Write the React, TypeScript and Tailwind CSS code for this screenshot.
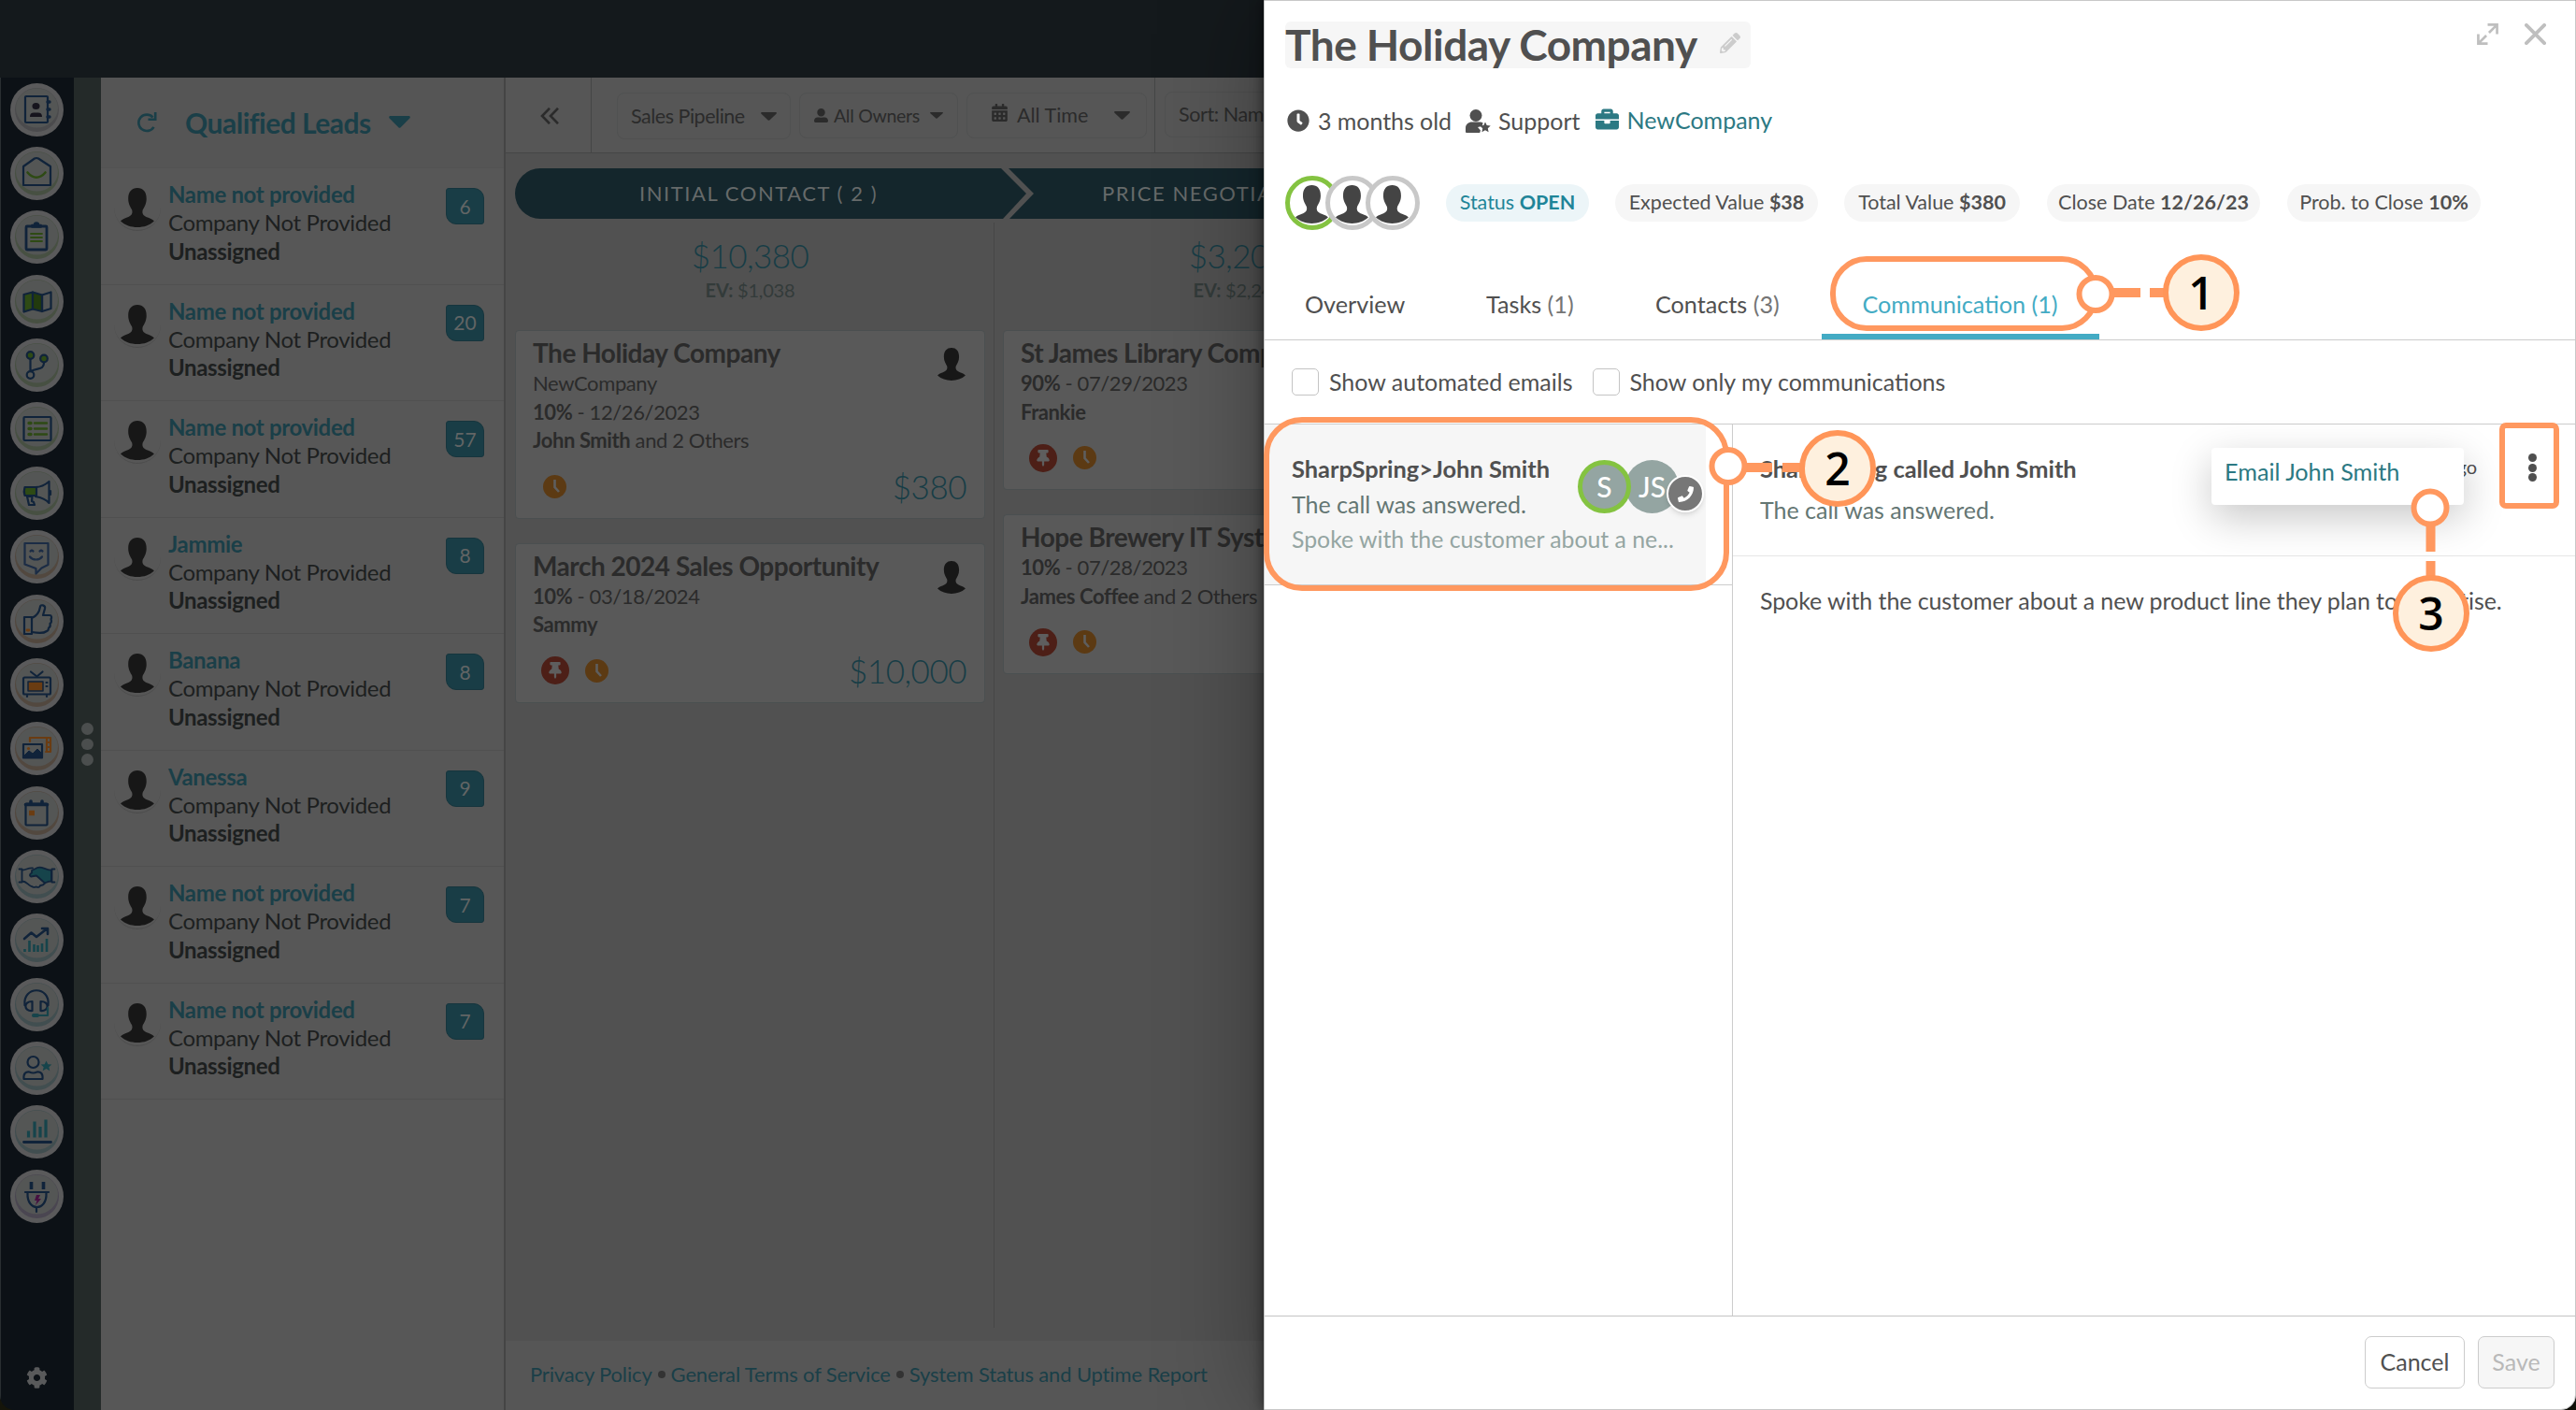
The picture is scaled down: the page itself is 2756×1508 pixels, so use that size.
import type { ReactNode } from 'react'
import { FaPencilAlt, FaUserAlt, FaBriefcase, FaCalendarAlt, FaThumbtack, FaClock, FaPhone, FaCog } from 'react-icons/fa'

const NAVY = '#10233a'
const GREEN = '#2e4a14'
const ORANGE = '#6a3c12'
const TEAL = '#16444b'

interface Lead {
  name: string
  score: number
}

const leads: Lead[] = [
  { name: 'Name not provided', score: 6 },
  { name: 'Name not provided', score: 20 },
  { name: 'Name not provided', score: 57 },
  { name: 'Jammie', score: 8 },
  { name: 'Banana', score: 8 },
  { name: 'Vanessa', score: 9 },
  { name: 'Name not provided', score: 7 },
  { name: 'Name not provided', score: 7 },
]

/** Sidebar icons, drawn in the 57x57 box of their round button. */
const navIcons: { key: string; tint: string; art: ReactNode }[] = [
  {
    key: 'contacts',
    tint: '#4b4b4d',
    art: (
      <>
        <rect x="16" y="14" width="24" height="28" rx="1" />
        <path d="M40 20h2M40 28h2M40 36h2" strokeWidth="3.4" />
        <ellipse cx="27.5" cy="24.5" rx="4" ry="3.6" fill="#16141d" stroke="none" />
        <path d="M21 36c0-4 2-5 6.500-4.400 4.500-.6 6.500.4 6.500 4.400z" fill="#16141d" stroke="none" />
      </>
    ),
  },
  {
    key: 'mail',
    tint: '#475042',
    art: (
      <>
        <path d="M14 21 26 12.500q2-1 4 0L43 21v20H14z" />
        <path d="M18.500 27.500c6 7 13 7 19 0" stroke={GREEN} strokeWidth="2.600" />
      </>
    ),
  },
  {
    key: 'forms',
    tint: '#475042',
    art: (
      <>
        <rect x="17" y="17" width="22" height="25" rx="1" strokeWidth="2.800" />
        <path d="M23 18v-2.500h2.500a2.500 2.500 0 0 1 5 0H33V18z" fill={NAVY} strokeWidth="1.500" />
        <path d="M22 25h12M22 29h12M22 33h12" stroke={GREEN} strokeWidth="1.800" />
      </>
    ),
  },
  {
    key: 'map',
    tint: '#475042',
    art: (
      <>
        <path d="M14.500 21 24 18.500v18L14.500 39.500z" fill={GREEN} />
        <path d="m24 18.500 10 3V39l-10-2.500z" fill="#223a0d" />
        <path d="m34 21.500 9.500-3V36L34 39z" />
      </>
    ),
  },
  {
    key: 'branch',
    tint: '#475042',
    art: (
      <>
        <path d="M21.500 22v13M36 26c0 8-7 5-14 9" />
        <circle cx="21.500" cy="18" r="3.800" fill={GREEN} />
        <circle cx="36" cy="21.500" r="3.800" fill={GREEN} />
        <circle cx="21.500" cy="39" r="3.800" />
      </>
    ),
  },
  {
    key: 'lists',
    tint: '#475042',
    art: (
      <>
        <rect x="14.500" y="16" width="29" height="25" rx="1" />
        <path d="M26 22.500h13M26 28.500h13M26 34.500h13" stroke={GREEN} strokeWidth="2.400" />
        <path d="M20 22.500h2M20 28.500h2M20 34.500h2" stroke={GREEN} strokeWidth="3.400" />
      </>
    ),
  },
  {
    key: 'campaigns',
    tint: '#475042',
    art: (
      <>
        <path d="M27 22c6 0 11-3 14.500-6v23C38 35 33 33 27 32z" />
        <path d="M15.500 22H28v9H15.500q-1.500-4.500 0-9z" fill={GREEN} />
        <path d="M18 32l2 9h6l-1-3-2-1 .5-5z" />
        <path d="M43 26v4" />
      </>
    ),
  },
  {
    key: 'chat',
    tint: '#52483f',
    art: (
      <>
        <path d="M15.500 14h25v23l-7 3.500-6 6V41l-12-4.500z" stroke="#1b2c45" />
        <path d="M21 28.500c3 4 10 4 13 0M21.500 22.500l1.500-1 1.500 1M31.500 22.500l1.500-1 1.500 1" stroke="#1b2c45" />
      </>
    ),
  },
  {
    key: 'social',
    tint: '#52483f',
    art: (
      <>
        <path d="M15 24h8v18h-8z" />
        <path d="M23 25c5-2 8-6 9-12 0-3 6-2 5 2l-2 7h7c2.500 0 2.500 3 1.500 4 .8 2 .5 4-1 5 .5 2 0 4-1.500 4.500 0 2-.5 3-2 3.500-4 3-10 2-16 1" />
        <path d="M18 38h2" stroke={ORANGE} strokeWidth="2.800" />
      </>
    ),
  },
  {
    key: 'media',
    tint: '#52483f',
    art: (
      <>
        <rect x="14" y="20.500" width="29" height="18" rx="1.500" />
        <rect x="19" y="25" width="16" height="10" fill={ORANGE} strokeWidth="1.500" />
        <path d="m22 14.500 6.500 5 6-5M18 40v1M39 40v1" />
        <path d="M38.500 26h1M38.500 30h1" />
      </>
    ),
  },
  {
    key: 'assets',
    tint: '#52483f',
    art: (
      <>
        <path d="M21 21v-4h22v15h-5M39 17v14M43 22h-4M43 27h-4" stroke={ORANGE} />
        <rect x="14" y="24" width="20" height="14.500" />
        <path d="m14 37 6-6 4 3 5-5 5 5v4H14z" fill={NAVY} strokeWidth="1" />
        <circle cx="19.500" cy="28.500" r="1.600" fill={ORANGE} stroke="none" />
      </>
    ),
  },
  {
    key: 'calendar',
    tint: '#52483f',
    art: (
      <>
        <rect x="16.500" y="18.500" width="23" height="23" rx="1" />
        <path d="M16.500 19.500h23M22 16v2M34 16v2" strokeWidth="3.600" />
        <path d="M20 28.500h6" stroke={ORANGE} strokeWidth="5.500" strokeLinecap="butt" />
      </>
    ),
  },
  {
    key: 'sales',
    tint: '#414e50',
    art: (
      <>
        <path d="m23 22 6-3c5-2 9 3 15 2.500v12c-4 0-5 1-7 2l-9-8-6 1c-2-1-1-3 1-4z" fill={TEAL} strokeWidth="1.800" />
        <path d="M9.500 20.500h3v14h-3M47.500 20.500h-3v14h3M13 21.500c4 0 6-2.500 11-2M13 33.500c5 0 6 5 11 6 2 1 3 0 4 0 2 1 4 0 4-1.500 3 0 4-1 5-2.500" strokeWidth="1.800" />
      </>
    ),
  },
  {
    key: 'analytics',
    tint: '#414e50',
    art: (
      <>
        <path d="m15 27 7.500-6.500 5.500 4.500 11-8.500M34 16h6v6" strokeWidth="2.600" />
        <path d="M15.500 41v-3M20.500 41V29M25.500 41v-8M29.500 41v-7M34 41v-9M39 41V27" stroke={TEAL} strokeWidth="2.600" strokeLinecap="butt" />
      </>
    ),
  },
  {
    key: 'support',
    tint: '#414e50',
    art: (
      <>
        <path d="M15.500 29C13 8 43 8 40.500 29M23.500 25v10c-9 1-10-10 0-10zM32.500 25v10c9 1 10-10 0-10z" />
        <path d="M40 32v8H28" stroke={TEAL} />
        <path d="M25 40h4" stroke={TEAL} strokeWidth="4" />
      </>
    ),
  },
  {
    key: 'accounts',
    tint: '#414e50',
    art: (
      <>
        <circle cx="24.500" cy="22" r="6" />
        <path d="M14.500 40c-.5-6 2-8 6-7.500q4 2 8 0c4-.5 6.500 1.500 6 7.500z" />
        <path d="m38.500 20.500 1.800 3.700 4 .4-3 2.600 1 4-3.800-2.200-3.800 2.200 1-4-3-2.600 4-.4z" fill={TEAL} stroke="none" />
      </>
    ),
  },
  {
    key: 'reports',
    tint: '#414e50',
    art: (
      <>
        <path d="M14.500 39.500h29" strokeWidth="2.800" />
        <path d="M19.500 34.500v-7M26 34.500v-17M32 34.500V23M38 34.500V15.500" stroke={TEAL} strokeWidth="3.200" strokeLinecap="butt" />
      </>
    ),
  },
  {
    key: 'integrations',
    tint: '#4a4651',
    art: (
      <>
        <path d="M16 24h25M18.500 25c-1 20 21 20 20 0M28 41v4" />
        <path d="M22.500 13v8M35.500 13v8" strokeWidth="3.600" strokeLinecap="butt" />
        <path d="M28 27h4l-2 4h3l-6 7 1.500-5H26z" fill="#461041" stroke="none" />
      </>
    ),
  },
]

function Silhouette({ className }: { className: string }) {
  return (
    <svg viewBox="0 0 36 42" className={className} fill="currentColor">
      <path d="M18 0c6 0 9.700 4 9.700 11.500 0 5.500-2.300 9-4 12-1.200 4.500 1.200 6.500 5.200 8 3.500 1.200 6 2.500 7 4C31 40 25 42 18 42S5 40 0 35.500c1-1.500 3.500-2.800 7-4 4-1.500 6.400-3.500 5.200-8-1.600-3-4-6.500-4-12C8.200 4 12 0 18 0z" />
    </svg>
  )
}

function Caret({ className }: { className: string }) {
  return (
    <svg viewBox="0 0 20 12" className={className} fill="currentColor" preserveAspectRatio="none">
      <path d="M1.200 0h17.600q1.800.6.600 2.200L11 11.200q-1 1-2 0L.6 2.200Q-.6.600 1.200 0z" />
    </svg>
  )
}

function Sidebar() {
  return (
    <div className="flex w-[79px] shrink-0 flex-col items-center border-l border-[#2a2f31] bg-[#0c1116] pr-px">
      {navIcons.map((icon) => (
        <div key={icon.key} className="flex h-[68.360px] w-[57px] shrink-0 items-center">
          <svg viewBox="0 0 57 57" className="size-[57px]" fill="none" stroke={NAVY} strokeWidth="2.200" strokeLinecap="round" strokeLinejoin="round">
            <circle cx="28.500" cy="28.500" r="28.500" fill="#5a5a5b" stroke="none" />
            <circle cx="28.500" cy="28.500" r="23.500" fill={icon.tint} stroke="none" />
            <ellipse cx="28.500" cy="26.500" rx="22.500" ry="21" fill="#545655" stroke="none" />
            {icon.art}
          </svg>
        </div>
      ))}
      <FaCog className="mt-auto mb-[23px] size-[23px] text-[#595a5b]" />
    </div>
  )
}

function LeadRow({ lead }: { lead: Lead }) {
  return (
    <div className="flex h-[124.500px] shrink-0 border-b border-[#505050] pt-[12px] pr-[21px] pl-[14px]">
      <div className="mt-[5px] flex size-[50px] shrink-0 justify-center rounded-full border-b border-[#4c4c4c] pt-[4px]">
        <Silhouette className="h-[42px] w-[36px] text-[#171717]" />
      </div>
      <div className="mt-px ml-[8px] flex-1 text-[24px] leading-[30.300px] tracking-[-0.340px] text-[#1d2020]">
        <div className="font-bold text-[#1a3f48]">{lead.name}</div>
        <div>Company Not Provided</div>
        <div className="font-bold">Unassigned</div>
      </div>
      <div className="mt-[9px] flex h-[39px] w-[41px] items-center justify-center rounded-tl-[3px] rounded-tr-[11px] rounded-br-[3px] rounded-bl-[11px] border border-[#16353d] bg-[#193d46] text-[21px] text-[#626565]">
        {lead.score}
      </div>
    </div>
  )
}

function LeadsPanel() {
  return (
    <div className="flex w-[433px] shrink-0 flex-col border-r-2 border-[#454545] bg-[#575757]">
      <div className="flex h-[97px] shrink-0 items-center border-b border-[#535353] bg-[#555] pl-[38px] text-[#1a3f48]">
        <svg viewBox="0 0 22 22" className="size-[22px]" fill="none" stroke="currentColor" strokeWidth="2.600">
          <path d="M18.500 15.800A8.700 8.700 0 1 1 17.500 5.500" />
          <path d="M12.500 7.800h7.700V0" />
        </svg>
        <span className="ml-[30px] text-[30px] font-bold tracking-[-0.500px]">Qualified Leads</span>
        <Caret className="mb-[2px] ml-[19px] h-[13px] w-[23px]" />
      </div>
      {leads.map((lead, i) => (
        <LeadRow key={i} lead={lead} />
      ))}
    </div>
  )
}

function Toolbar() {
  return (
    <div className="flex h-[81px] shrink-0 border-b border-[#454646] bg-[#565656] text-[#2b2b2b]">
      <div className="flex w-[92px] shrink-0 items-center justify-center border-r border-[#454646] pt-px pl-[2px]">
        <svg viewBox="0 0 20 18" className="h-[18px] w-[20px]" fill="none" stroke="currentColor" strokeWidth="2.600">
          <path d="M10 .8 2 9l8 8.200M19 .8 11 9l8 8.200" />
        </svg>
      </div>
      <div className="flex w-[603px] shrink-0 items-start gap-[9px] border-r border-[#454646] pt-[16px] pl-[27px]">
        <div className="flex h-[50px] w-[186px] items-center justify-between rounded-[8px] border border-[#505151] px-[14px] text-[21.500px] tracking-[-0.480px] whitespace-nowrap">
          Sales Pipeline
          <Caret className="h-[9px] w-[17px]" />
        </div>
        <div className="flex h-[49px] w-[170px] items-center rounded-[8px] border border-[#505151] px-[15px] text-[19.500px] tracking-[-0.300px] whitespace-nowrap">
          <FaUserAlt className="mr-[6px] size-[15px]" />
          All Owners
          <Caret className="ml-auto h-[7px] w-[14px]" />
        </div>
        <div className="flex h-[49px] w-[193px] items-center rounded-[8px] border border-[#505151] pr-[17px] pl-[25px] text-[21.500px] whitespace-nowrap">
          <FaCalendarAlt className="mr-[9px] mb-[6px] size-[19px]" />
          All Time
          <Caret className="ml-auto h-[9px] w-[17px]" />
        </div>
      </div>
      <div className="mt-[15px] ml-[10px] flex h-[49px] w-[200px] shrink-0 items-center rounded-[8px] border border-[#505151] pl-[14px] text-[21.500px] tracking-[-0.400px] whitespace-nowrap">
        Sort: Name
      </div>
    </div>
  )
}

interface DealProps {
  title: string
  company?: string
  prob: string
  date: string
  contact: string
  others?: string
  pinned?: boolean
  amount?: string
}

function DealCard({ title, company, prob, date, contact, others, pinned, amount }: DealProps) {
  return (
    <div className="flex w-[503px] shrink-0 flex-col rounded-[4px] border border-[#4a4f50] bg-[#595959] pt-[5px] pr-[19px] pb-[10px] pl-[18px] text-[#2b2b2b]">
      <div className="flex justify-between">
        <div className="text-[22px] leading-[30.500px] tracking-[-0.400px] whitespace-nowrap">
          <div className="text-[28px] leading-[36px] font-bold tracking-[-0.480px]">{title}</div>
          {company && <div>{company}</div>}
          <div>
            <b>{prob}</b> - {date}
          </div>
          <div>
            <b>{contact}</b>
            {others}
          </div>
        </div>
        {amount && <Silhouette className="mt-[13px] mr-px h-[35px] w-[30px] shrink-0 text-[#171717]" />}
      </div>
      <div className="mt-[10px] flex h-[47px] items-center pl-[9px]">
        {pinned ? (
          <span className="mr-[17px] flex size-[30px] items-center justify-center rounded-full bg-[#4d1f17]">
            <FaThumbtack className="size-[18px] text-[#5e5e5e]" />
          </span>
        ) : (
          <span className="w-[2px]" />
        )}
        <span className="flex size-[25px] items-center justify-center rounded-full bg-[#5c3a13]">
          <svg viewBox="0 0 25 25" className="size-[25px]" fill="none" stroke="#5e5e5e" strokeWidth="2.600">
            <path d="M12.500 5v8l4.500 5" />
          </svg>
        </span>
        <span className="ml-auto text-[35px] font-light tracking-[-0.500px] text-[#173d46]">{amount}</span>
      </div>
    </div>
  )
}

function StageSummary({ total, ev }: { total: string; ev: string }) {
  return (
    <div className="flex h-[115px] w-[503px] shrink-0 flex-col items-center pt-[14px]">
      <div className="text-[35px] leading-[42px] font-light tracking-[-0.600px] text-[#173d46]">{total}</div>
      <div className="mt-[4px] text-[20px] leading-[24px] tracking-[-0.200px] text-[#333b3a]">
        <b>EV:</b> {ev}
      </div>
    </div>
  )
}

function Board() {
  return (
    <div className="flex w-[2215px] flex-col overflow-hidden bg-[#515151]">
      <Toolbar />
      <div className="mt-[16px] ml-[10px] flex h-[54px] shrink-0 text-[22px] tracking-[1.550px] text-[#666a6a]">
        <div className="flex w-[547px] items-center rounded-l-full bg-[#14262c] pb-px pl-[133px] whitespace-nowrap [clip-path:polygon(0_0,520px_0,547px_50%,522px_100%,0_100%)]">
          INITIAL CONTACT ( 2 )
        </div>
        <div className="-ml-[19px] flex w-[560px] items-center bg-[#14262c] pb-px pl-[100px] whitespace-nowrap [clip-path:polygon(0_0,100%_0,100%_100%,1px_100%,27px_50%)]">
          PRICE NEGOTIATION ( 2 )
        </div>
      </div>
      <div className="mt-[4px] flex h-[1182px] shrink-0">
        <div className="flex w-[523px] shrink-0 flex-col border-r border-[#464646] pl-[10px]">
          <StageSummary total="$10,380" ev="$1,038" />
          <div className="flex flex-col gap-[26px]">
            <DealCard title="The Holiday Company" company="NewCompany" prob="10%" date="12/26/2023" contact="John Smith" others=" and 2 Others" amount="$380" />
            <DealCard title="March 2024 Sales Opportunity" prob="10%" date="03/18/2024" contact="Sammy" pinned amount="$10,000" />
          </div>
        </div>
        <div className="flex w-[523px] shrink-0 flex-col pl-[9px]">
          <StageSummary total="$3,200" ev="$2,240" />
          <div className="flex flex-col gap-[26px]">
            <DealCard title="St James Library Computers" prob="90%" date="07/29/2023" contact="Frankie" pinned />
            <DealCard title="Hope Brewery IT Systems" prob="10%" date="07/28/2023" contact="James Coffee" others=" and 2 Others" pinned />
          </div>
        </div>
      </div>
      <div className="mt-[14px] flex flex-1 items-center gap-[6px] bg-[#565656] pb-[3px] pl-[26px] text-[22px] tracking-[-0.150px] text-[#1a3f48]">
        <span>Privacy Policy</span>
        <i className="size-[8px] rounded-full bg-[#333]" />
        <span>General Terms of Service</span>
        <i className="size-[8px] rounded-full bg-[#333]" />
        <span>System Status and Uptime Report</span>
      </div>
    </div>
  )
}

function DrawerAvatar({ className }: { className: string }) {
  return (
    <div className={`flex size-[58px] justify-center overflow-hidden rounded-full border-[5px] bg-white pt-[4px] pr-[2px] ${className}`}>
      <Silhouette className="h-[43px] w-[35px] shrink-0 text-[#444]" />
    </div>
  )
}

function Chip({ label, value, className }: { label: string; value: string; className: string }) {
  return (
    <div className={`flex h-[40px] items-center justify-center rounded-full pb-[2px] text-[21.500px] whitespace-pre ${className}`}>
      {label} <b>{value}</b>
    </div>
  )
}

function DrawerHeader() {
  return (
    <div className="flex h-[363px] shrink-0 flex-col border-b border-[#ccc]">
      <div className="flex h-[72px] shrink-0 items-end justify-between pl-[22px]">
        <div className="flex h-[50px] items-center rounded-[6px] bg-[#f6f6f6] pr-[11px]">
          <h1 className="text-[46px] leading-[50px] font-bold tracking-[-0.500px]">The Holiday Company</h1>
          <FaPencilAlt className="ml-[24px] mb-[4px] size-[22px] text-[#ccc]" />
        </div>
        <div className="mb-[25px] flex items-center gap-[28px] pr-[31px] text-[#bfbfbf]">
          <svg viewBox="0 0 24 24" className="size-[23px]" fill="none" stroke="currentColor" strokeWidth="2.800">
            <path d="M12 1.500h10.500V12M22 2l-8.500 8.500M1.500 12v10.500H12M2 22l8.500-8.500" />
          </svg>
          <svg viewBox="0 0 24 24" className="size-[23px]" fill="none" stroke="currentColor" strokeWidth="4" strokeLinecap="round">
            <path d="m2 2 20 20M22 2 2 22" />
          </svg>
        </div>
      </div>
      <div className="mt-[40px] flex h-[32px] shrink-0 items-center pl-[24px] text-[25px]">
        <FaClock className="size-[24px]" />
        <span className="mt-[2px] ml-[9px] tracking-[-0.050px]">3 months old</span>
        <svg viewBox="0 0 27 25" className="ml-[15px] h-[25px] w-[27px]" fill="currentColor">
          <circle cx="11" cy="6.500" r="6.500" />
          <path d="M0 24v-4c0-4 3-6.500 7-6.500h8c1.500 0 2.500.4 3.600 1l-1 3.500-4.600 1 3 3.500-.8 2.500H1q-1 0-1-1z" />
          <path d="m21 13.500 1.700 3.600 4 .5-2.900 2.700.8 4-3.600-2-3.600 2 .8-4-2.900-2.700 4-.5z" />
        </svg>
        <span className="mt-[2px] ml-[8px]">Support</span>
        <FaBriefcase className="mb-[3px] ml-[16px] size-[25px] text-[#2c7983]" />
        <span className="mb-px ml-[9px] text-[#2c7983]">NewCompany</span>
      </div>
      <div className="mt-[43px] flex h-[58px] shrink-0 items-center pl-[22px]">
        <DrawerAvatar className="border-[#84c341]" />
        <DrawerAvatar className="-ml-[15px] border-[#c8c8c8]" />
        <DrawerAvatar className="-ml-[15px] border-[#c8c8c8]" />
        <Chip label="Status" value="OPEN" className="ml-[28px] w-[153px] bg-[#ecf5f8] text-[#1f8598]" />
        <Chip label="Expected Value" value="$38" className="ml-[28px] w-[217px] bg-[#f6f6f6]" />
        <Chip label="Total Value" value="$380" className="ml-[28px] w-[188px] bg-[#f6f6f6]" />
        <Chip label="Close Date" value="12/26/23" className="ml-[29px] w-[228px] bg-[#f6f6f6]" />
        <Chip label="Prob. to Close" value="10%" className="ml-[29px] w-[207px] bg-[#f6f6f6]" />
      </div>
      <div className="mt-auto flex pt-px text-[25.200px]">
        <div className="w-[194px] pl-[43px]">Overview</div>
        <div className="w-[181px] pl-[43px]">
          Tasks <span className="text-[#757575]">(1)</span>
        </div>
        <div className="w-[221px] pl-[43px]">
          Contacts <span className="text-[#757575]">(3)</span>
        </div>
        <div className="h-[56px] w-[297px] border-b-[6px] border-[#43abc4] pr-px text-center text-[#43abc4]">Communication (1)</div>
      </div>
    </div>
  )
}

function Filters() {
  return (
    <div className="flex h-[90px] shrink-0 items-center border-b border-[#ccc] pl-[29px] text-[25px]">
      <span className="size-[29px] rounded-[5px] border border-[#c4c4c4]" />
      <span className="ml-[11px]">Show automated emails</span>
      <span className="ml-[21px] size-[29px] rounded-[5px] border border-[#c4c4c4]" />
      <span className="ml-[11px]">Show only my communications</span>
    </div>
  )
}

function Communications() {
  return (
    <div className="flex flex-1">
      <div className="w-[501px] shrink-0 border-r border-[#ccc]">
        <div className="border-b border-[#ccc]">
          <div className="flex h-[171px] w-[472px] flex-col bg-[#f6f6f6] pt-[28px] pl-[29px]">
            <div className="flex h-[77px]">
              <div className="w-[306px] text-[25px] leading-[38px] whitespace-nowrap">
                <div className="text-[25.400px] font-bold">SharpSpring&gt;John Smith</div>
                <div className="text-[#647673]">The call was answered.</div>
              </div>
              <div className="mt-[10px] flex h-[57px] text-[30px] text-white">
                <div className="z-10 flex size-[57px] items-center justify-center rounded-full border-[5px] border-[#84c341] bg-[#94a5a2] font-medium">S</div>
                <div className="-ml-[6px] flex size-[57px] items-center justify-center rounded-full bg-[#94a5a2] font-medium">JS</div>
                <div className="z-10 mt-[16px] -ml-[13px] flex size-[40px] items-center justify-center rounded-full border-2 border-white bg-[#777] shadow-md">
                  <FaPhone className="size-[17px]" />
                </div>
              </div>
            </div>
            <div className="text-[24.800px] leading-[36px] whitespace-nowrap text-[#94a5a2]">Spoke with the customer about a ne...</div>
          </div>
        </div>
      </div>
      <div className="relative flex-1">
        <div className="flex h-[141px] justify-between border-b border-[#e6e6e6] pt-[25px] pr-[41px] pl-[29px]">
          <div className="text-[25px] leading-[44px]">
            <div className="text-[25.400px] font-bold">SharpSpring called John Smith</div>
            <div className="text-[#647673]">The call was answered.</div>
          </div>
          <div className="flex">
            <span className="mt-[5px] mr-[55px] text-[20px]">2 minutes ago</span>
            <div className="mt-[6px] flex flex-col gap-[1.500px]">
              <i className="size-[9px] rounded-full bg-[#4f4f4f]" />
              <i className="size-[9px] rounded-full bg-[#4f4f4f]" />
              <i className="size-[9px] rounded-full bg-[#4f4f4f]" />
            </div>
          </div>
        </div>
        <p className="pt-[29px] pl-[29px] text-[25px] tracking-[-0.090px] whitespace-nowrap">Spoke with the customer about a new product line they plan to advertise.</p>
        <div className="absolute top-[25px] left-[512px] h-[61px] w-[270px] rounded-[4px] bg-white pt-[7px] pl-[14px] text-[25.200px] text-[#2c7983] shadow-[0_14px_44px_rgba(0,0,0,0.220)]">
          Email John Smith
        </div>
      </div>
    </div>
  )
}

function Drawer() {
  return (
    <div className="absolute top-0 left-[1352px] flex h-[1508px] w-[1404px] flex-col rounded-br-[16px] border border-[#c8c8c8] bg-white text-[#505050] shadow-[0_0_14px_rgba(0,0,0,0.550),0_0_110px_rgba(0,0,0,0.350)]">
      <DrawerHeader />
      <Filters />
      <Communications />
      <div className="flex h-[100px] shrink-0 items-start justify-end gap-[14px] border-t border-[#c4c4c4] pt-[21px] pr-[22px] text-[25px]">
        <button type="button" className="h-[56px] w-[107px] rounded-[7px] border border-[#ccc]">
          Cancel
        </button>
        <button type="button" className="h-[56px] w-[82px] rounded-[7px] border border-[#ccc] bg-[#f6f6f6] text-[#b9b9b9]">
          Save
        </button>
      </div>
    </div>
  )
}

/** Numbered guide markers that float above the whole screen. */
function Callouts() {
  const steps = [
    { n: '1', x: 2355, y: 313 },
    { n: '2', x: 1966, y: 501 },
    { n: '3', x: 2601, y: 656 },
  ]
  return (
    <svg viewBox="0 0 2756 1508" className="pointer-events-none absolute top-0 left-0 h-[1508px] w-[2756px]" fill="none" stroke="#ff985f" strokeWidth="6">
      <rect x="1961" y="277" width="281" height="74" rx="36" />
      <rect x="1355" y="449" width="492" height="180" rx="38" />
      <rect x="2677" y="455" width="58" height="86" rx="4" />
      <path d="M2260 313h30M2300 313h16M1866 500h30M1907 500h20" strokeWidth="10" />
      <path d="M2600.500 560v30M2600.500 600v18" strokeWidth="10" />
      <circle cx="2242" cy="314.500" r="17.500" fill="#fff" />
      <circle cx="1849" cy="498.500" r="17.500" fill="#fff" />
      <circle cx="2600" cy="543" r="17.500" fill="#fff" />
      {steps.map((step) => (
        <g key={step.n}>
          <circle cx={step.x} cy={step.y} r="38" fill="#fef0de" stroke="#ff9558" />
          <text x={step.x} y={step.y + 18} textAnchor="middle" fill="#000" stroke="none" className="font-['Open_Sans',sans-serif] text-[48px] font-semibold">
            {step.n}
          </text>
        </g>
      ))}
    </svg>
  )
}

export default function App() {
  return (
    <div className="relative h-[1508px] w-[2756px] overflow-hidden bg-[#15150a] font-[Lato,sans-serif]">
      <div className="flex h-[1508px] flex-col overflow-hidden rounded-b-[16px] bg-[#14191c]">
        <div className="h-[83px] shrink-0" />
        <div className="flex flex-1">
          <Sidebar />
          <div className="flex w-[29px] shrink-0 flex-col items-center gap-[4px] bg-[#242a29] pt-[690px]">
            <i className="size-[12.500px] rounded-full bg-[#4b4e4e]" />
            <i className="size-[12.500px] rounded-full bg-[#4b4e4e]" />
            <i className="size-[12.500px] rounded-full bg-[#4b4e4e]" />
          </div>
          <LeadsPanel />
          <Board />
        </div>
      </div>
      <Drawer />
      <Callouts />
    </div>
  )
}
